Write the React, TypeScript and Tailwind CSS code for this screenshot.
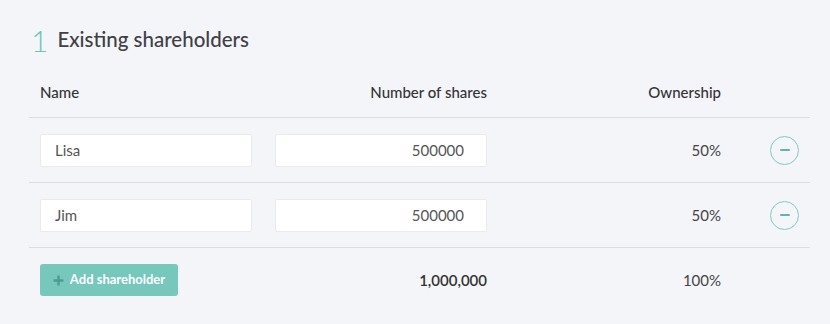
import { useState } from "react";

type Holder = { id: number; name: string; shares: string };

const font = { fontFamily: "Lato, 'Open Sans', sans-serif" };

function MinusButton() {
  return (
    <button
      type="button"
      className="flex h-[29px] w-[29px] items-center justify-center rounded-full border border-[#7ccdc2] bg-transparent"
    >
      <span className="block h-[2px] w-[10px] rounded-sm bg-[#5fb5a9]" />
    </button>
  );
}

export default function App() {
  const [holders] = useState<Holder[]>([
    { id: 1, name: "Lisa", shares: "500000" },
    { id: 2, name: "Jim", shares: "500000" },
  ]);

  return (
    <div className="min-h-[324px] w-full bg-[#f4f5f9] text-[#333]" style={font}>
      <div className="pl-[29px] pr-[20px] pt-[20px]">
        {/* Section title */}
        <div className="flex items-center pl-[2px]">
          <span className="mr-[9px] mt-[3px] text-[30px] font-light leading-[34px] text-[#6cc5b9]">1</span>
          <h2 className="text-[20.5px] font-medium leading-[28px] text-[#3f3f44]">Existing shareholders</h2>
        </div>

        {/* Table header */}
        <div className="mt-[25px] grid grid-cols-[212px_212px_1fr_55px] gap-x-[23px] border-b border-[#dcdde2] px-[11px] pb-[15px] text-[15px] font-medium leading-[20px] text-[#333]">
          <div>Name</div>
          <div className="text-right">Number of shares</div>
          <div className="text-right">Ownership</div>
          <div />
        </div>

        {/* Rows */}
        {holders.map((h) => (
          <div
            key={h.id}
            className="grid h-[65px] grid-cols-[212px_212px_1fr_55px] items-center gap-x-[23px] border-b border-[#dcdde2] px-[11px]"
          >
            <input
              defaultValue={h.name}
              className="h-[33px] rounded-[2px] border border-[#e9eaee] bg-white pl-[14px] pr-[14px] text-[15px] text-[#555] outline-none"
              style={font}
            />
            <input
              defaultValue={h.shares}
              className="h-[33px] rounded-[2px] border border-[#e9eaee] bg-white pl-[14px] pr-[22px] text-right text-[15px] text-[#555] outline-none"
              style={font}
            />
            <div className="text-right text-[15px] text-[#444]">50%</div>
            <div className="flex justify-end">
              <MinusButton />
            </div>
          </div>
        ))}

        {/* Footer */}
        <div className="grid h-[64px] grid-cols-[212px_212px_1fr_55px] items-center gap-x-[23px] px-[11px]">
          <div>
            <button
              type="button"
              className="flex h-[32px] w-[138px] items-center justify-center rounded-[3px] bg-[#76c7bc] text-[13px] font-bold text-white"
              style={font}
            >
              <svg width="11" height="11" viewBox="0 0 11 11" className="mr-[6px]">
                <path d="M5.5 0.5v10M0.5 5.5h10" stroke="#4f9d92" strokeWidth="2.4" />
              </svg>
              Add shareholder
            </button>
          </div>
          <div className="text-right text-[15px] font-semibold text-[#333]">1,000,000</div>
          <div className="text-right text-[15px] text-[#444]">100%</div>
          <div />
        </div>
      </div>
    </div>
  );
}
